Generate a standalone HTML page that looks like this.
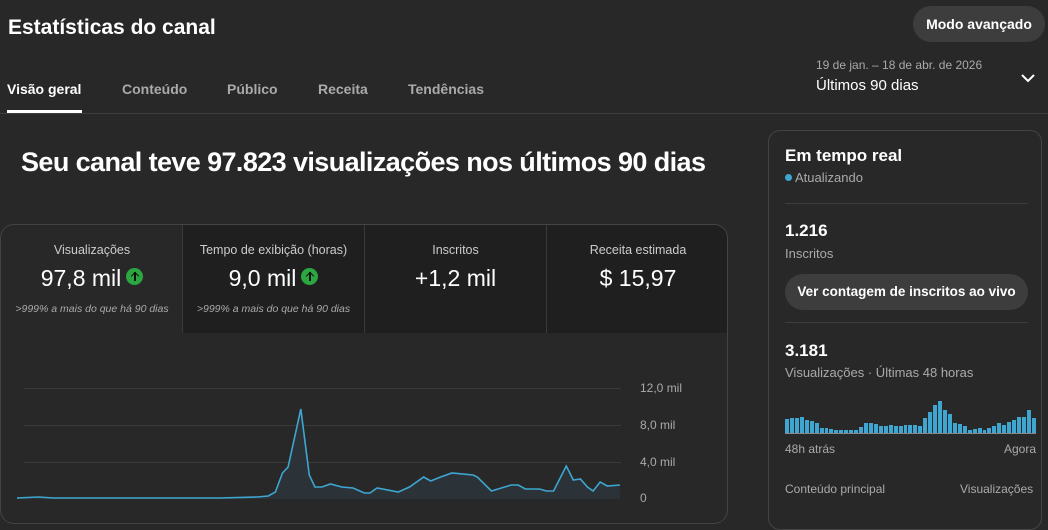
<!DOCTYPE html>
<html><head><meta charset="utf-8"><style>
*{margin:0;padding:0;box-sizing:border-box}
body{width:1048px;height:499px;overflow:hidden;background:#282828;font-family:"Liberation Sans",sans-serif;color:#fff;position:relative}
.a{position:absolute;white-space:nowrap}
.tab{position:absolute;top:81px;font-size:14px;font-weight:bold;color:#aaa}
.tile{position:absolute;top:0;width:182px;height:108px;text-align:center;background:#1f1f1f;border-left:1px solid #3a3a3a}
.tile .l{font-size:12.5px;color:#ccc;margin-top:18px}
.tile .v{font-size:23px;margin-top:8px}
.tile .s{font-size:10.5px;font-style:italic;color:#aaa;margin-top:11px}
.up{display:inline-block;width:17px;height:17px;border-radius:50%;background:#2ba640;vertical-align:1px;margin-left:5px;position:relative}
.up:after{content:"";position:absolute;left:8px;top:4px;width:1.5px;height:9px;background:#111}
.up:before{content:"";position:absolute;left:5.5px;top:4.5px;width:5px;height:5px;border-left:1.5px solid #111;border-top:1.5px solid #111;transform:rotate(45deg)}
.yl{position:absolute;left:640px;font-size:12px;color:#aaa}
.gl{position:absolute;left:24px;width:597px;height:1px;background:#3a3a3a}
</style></head><body>
<div class="a" style="left:8px;top:16px;font-size:21px;font-weight:bold">Estatísticas do canal</div>
<div class="a" style="left:913px;top:6px;width:132px;height:36px;border-radius:18px;background:#3d3d3d;font-size:14px;font-weight:bold;text-align:center;line-height:36px">Modo avançado</div>
<div class="tab" style="left:7px;color:#fff">Visão geral</div>
<div class="a" style="left:7px;top:110px;width:75px;height:3px;background:#fff"></div>
<div class="tab" style="left:122px">Conteúdo</div>
<div class="tab" style="left:227px">Público</div>
<div class="tab" style="left:318px">Receita</div>
<div class="tab" style="left:408px">Tendências</div>
<div class="a" style="left:0;top:113px;width:1048px;height:1px;background:#3e3e3e"></div>
<div class="a" style="left:816px;top:58px;font-size:12px;color:#aaa">19 de jan. – 18 de abr. de 2026</div>
<div class="a" style="left:816px;top:77px;font-size:15px">Últimos 90 dias</div>
<svg class="a" style="left:1020px;top:72px" width="16" height="12"><path d="M2 3l6 6 6-6" stroke="#fff" stroke-width="2" fill="none"/></svg>
<div class="a" style="left:21px;top:147px;font-size:27px;font-weight:bold;letter-spacing:-0.6px">Seu canal teve 97.823 visualizações nos últimos 90 dias</div>

<div class="a" style="left:0;top:224px;width:728px;height:300px;border:1px solid #444;border-radius:14px;overflow:hidden;background:#282828">
<div class="tile" style="left:0;background:#282828;border-left:none"><div class="l">Visualizações</div><div class="v">97,8 mil<span class="up"></span></div><div class="s">&gt;999% a mais do que há 90 dias</div></div>
<div class="tile" style="left:181px"><div class="l">Tempo de exibição (horas)</div><div class="v">9,0 mil<span class="up"></span></div><div class="s">&gt;999% a mais do que há 90 dias</div></div>
<div class="tile" style="left:363px"><div class="l">Inscritos</div><div class="v">+1,2 mil</div></div>
<div class="tile" style="left:545px;width:183px"><div class="l">Receita estimada</div><div class="v">$ 15,97</div></div>
</div>
<div class="gl" style="top:388px"></div><div class="gl" style="top:425px"></div><div class="gl" style="top:462px"></div>
<div class="yl" style="top:381px">12,0 mil</div><div class="yl" style="top:418px">8,0 mil</div><div class="yl" style="top:455px">4,0 mil</div><div class="yl" style="top:491px">0</div>
<svg class="a" style="left:0;top:0" width="730" height="499">
<g transform="scale(1.412 1) translate(-4.96 0)">
<polygon fill="#2b3338" points="17,498 32,497 43,498 160,498 187,497 195,496 200,492 205,473 209,467 218,409 224,475 228,487 233,487 239,484 247,487 255,488 263,493 267,493 272,488 287,492 295,487 305,477 310,481 317,477 325,473 340,475 343,477 353,491 367,485 372,485 377,489 387,489 392,491 397,491 406,466 411,480 416,479 421,487 425,491 430,482 435,486 444,485 444,499 17,499"/>
<polyline fill="none" stroke="#3ea6d0" stroke-width="1.6" vector-effect="non-scaling-stroke" points="17,498 32,497 43,498 160,498 187,497 195,496 200,492 205,473 209,467 218,409 224,475 228,487 233,487 239,484 247,487 255,488 263,493 267,493 272,488 287,492 295,487 305,477 310,481 317,477 325,473 340,475 343,477 353,491 367,485 372,485 377,489 387,489 392,491 397,491 406,466 411,480 416,479 421,487 425,491 430,482 435,486 444,485"/>
</g>
</svg>

<div class="a" style="left:768px;top:130px;width:274px;height:400px;border:1px solid #444;border-radius:12px"></div>
<div class="a" style="left:785px;top:146px;font-size:17px;font-weight:bold">Em tempo real</div>
<div class="a" style="left:785px;top:170px;font-size:13px;color:#aaa"><span style="display:inline-block;width:7px;height:7px;border-radius:50%;background:#3ea6d0;margin-right:3px;vertical-align:1px"></span>Atualizando</div>
<div class="a" style="left:785px;top:203px;width:243px;height:1px;background:#3e3e3e"></div>
<div class="a" style="left:785px;top:221px;font-size:17px;font-weight:bold">1.216</div>
<div class="a" style="left:785px;top:246px;font-size:13px;color:#aaa">Inscritos</div>
<div class="a" style="left:785px;top:274px;width:243px;height:36px;border-radius:18px;background:#3d3d3d;font-size:13.5px;font-weight:bold;text-align:center;line-height:36px">Ver contagem de inscritos ao vivo</div>
<div class="a" style="left:785px;top:322px;width:243px;height:1px;background:#3e3e3e"></div>
<div class="a" style="left:785px;top:341px;font-size:17px;font-weight:bold">3.181</div>
<div class="a" style="left:785px;top:365px;font-size:13px;color:#aaa">Visualizações · Últimas 48 horas</div>
<div class="a" style="left:785px;top:395px;width:251px;height:39px;display:flex;align-items:flex-end;gap:1px;border-bottom:1px solid #888">
<script>
var h=[14,15,15,16,13,12,10,5,5,4,3,3,3,3,3,6,10,10,9,7,7,8,7,7,8,8,8,7,15,21,28,32,23,19,10,9,7,3,4,5,3,5,7,10,8,11,13,16,16,23,15];
document.write(h.map(function(v){return '<div style="flex:1;height:'+v+'px;background:#3ea6d0"></div>'}).join(''));
</script>
</div>
<div class="a" style="left:785px;top:442px;font-size:12px;color:#aaa">48h atrás</div>
<div class="a" style="left:1004px;top:442px;font-size:12px;color:#aaa">Agora</div>
<div class="a" style="left:785px;top:482px;font-size:12px;color:#aaa">Conteúdo principal</div>
<div class="a" style="left:960px;top:482px;font-size:12px;color:#aaa">Visualizações</div>
</body></html>
